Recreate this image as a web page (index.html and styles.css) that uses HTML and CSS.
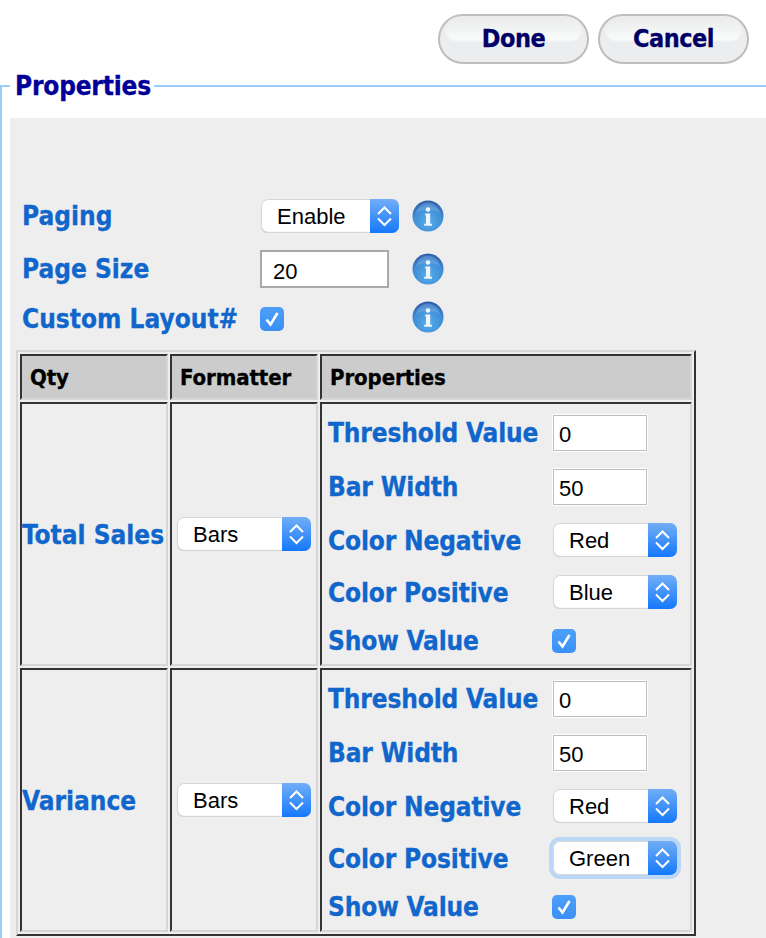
FILE: index.html
```html
<!DOCTYPE html>
<html lang="en">
<head>
<meta charset="utf-8">
<title>Properties</title>
<link rel="stylesheet" href="styles.css">
</head>
<body>
<svg class="defs" width="0" height="0" aria-hidden="true">
  <defs>
    <radialGradient id="ig" cx="50%" cy="68%" r="66%">
      <stop offset="0" stop-color="#58aeea"/>
      <stop offset="0.72" stop-color="#3f8dd6"/>
      <stop offset="1" stop-color="#2f5aa8"/>
    </radialGradient>
    <symbol id="info" viewBox="0 0 32 32">
      <circle cx="16" cy="16" r="15.500" fill="url(#ig)"/>
      <path d="M4 13C6 6 11 2.500 16 2.500s10 3.500 12 10.500C21 9 11 9 4 13z" fill="#fff" opacity=".14"/>
      <circle cx="16" cy="9.500" r="2.300" fill="#eef6fd"/>
      <path d="M13.200 13.500h5v10.200h1.800v2.100h-7.800v-2.100h1.800v-8.100h-.8z" fill="#eef6fd"/>
    </symbol>
    <symbol id="chev" viewBox="0 0 29 34">
      <path d="M8 15l6.500-6.500 6.500 6.500M8 19.500l6.500 6.500 6.500-6.500" fill="none" stroke="#fff" stroke-width="2"/>
    </symbol>
    <symbol id="tick" viewBox="0 0 24 24">
      <path d="M6.500 12.500l4 5 7-11.500" fill="none" stroke="#fff" stroke-width="2.600"/>
    </symbol>
  </defs>
</svg>
<div class="actions">
  <button class="pill" type="button">Done</button>
  <button class="pill" type="button">Cancel</button>
</div>
<fieldset class="group">
  <legend class="group-title">Properties</legend>
  <div class="panel">
    <div class="row row-paging">
      <span class="label">Paging</span>
      <div class="select select-wide"><span class="select-text">Enable</span><span class="select-arrows"><svg width="29" height="34"><use href="#chev"/></svg></span></div>
      <svg class="info" width="32" height="32"><use href="#info"/></svg>
    </div>
    <div class="row row-size">
      <span class="label">Page Size</span>
      <input class="page-size" type="text" value="20">
      <svg class="info" width="32" height="32"><use href="#info"/></svg>
    </div>
    <div class="row row-custom">
      <span class="label">Custom Layout#</span>
      <span class="check check-top"><svg width="24" height="24"><use href="#tick"/></svg></span>
      <svg class="info" width="32" height="32"><use href="#info"/></svg>
    </div>
    <table class="grid">
      <thead>
        <tr>
          <th class="col-qty">Qty</th>
          <th class="col-fmt">Formatter</th>
          <th class="col-props">Properties</th>
        </tr>
      </thead>
      <tbody>
        <tr>
          <td class="name"><span class="label">Total Sales</span></td>
          <td class="fmt"><div class="select select-fmt"><span class="select-text">Bars</span><span class="select-arrows"><svg width="29" height="34"><use href="#chev"/></svg></span></div></td>
          <td class="props">
            <div class="prop-grid">
              <span class="label">Threshold Value</span><input class="num" type="text" value="0">
              <span class="label">Bar Width</span><input class="num" type="text" value="50">
              <span class="label label-select">Color Negative</span><div class="select select-prop"><span class="select-text">Red</span><span class="select-arrows"><svg width="29" height="34"><use href="#chev"/></svg></span></div>
              <span class="label label-select">Color Positive</span><div class="select select-prop"><span class="select-text">Blue</span><span class="select-arrows"><svg width="29" height="34"><use href="#chev"/></svg></span></div>
              <span class="label">Show Value</span><span class="check check-prop"><svg width="24" height="24"><use href="#tick"/></svg></span>
            </div>
          </td>
        </tr>
        <tr>
          <td class="name"><span class="label">Variance</span></td>
          <td class="fmt"><div class="select select-fmt"><span class="select-text">Bars</span><span class="select-arrows"><svg width="29" height="34"><use href="#chev"/></svg></span></div></td>
          <td class="props">
            <div class="prop-grid">
              <span class="label">Threshold Value</span><input class="num" type="text" value="0">
              <span class="label">Bar Width</span><input class="num" type="text" value="50">
              <span class="label label-select">Color Negative</span><div class="select select-prop"><span class="select-text">Red</span><span class="select-arrows"><svg width="29" height="34"><use href="#chev"/></svg></span></div>
              <span class="label label-select">Color Positive</span><div class="select select-prop select-focus"><span class="select-text">Green</span><span class="select-arrows"><svg width="29" height="34"><use href="#chev"/></svg></span></div>
              <span class="label">Show Value</span><span class="check check-prop"><svg width="24" height="24"><use href="#tick"/></svg></span>
            </div>
          </td>
        </tr>
      </tbody>
    </table>
  </div>
</fieldset>
</body>
</html>
```
FILE: styles.css
```css
html, body {
  margin: 0;
  height: 938px;
  overflow: hidden;
  background: #fff;
}
body {
  font-family: "DejaVu Sans Condensed", "DejaVu Sans", sans-serif;
}
.defs { position: absolute; }

.actions {
  display: flex;
  justify-content: flex-end;
  gap: 9px;
  padding: 14px 17px 0 0;
  height: 50px;
}
.pill {
  position: relative;
  isolation: isolate;
  width: 151px;
  height: 50px;
  box-sizing: border-box;
  border: 2px solid #bdbdbd;
  border-radius: 25px;
  background: #ecedef;
  font: bold 25px "DejaVu Sans Condensed", "DejaVu Sans", sans-serif;
  letter-spacing: -0.5px;
  -webkit-text-stroke: 0.3px #000066;
  color: #000066;
  padding: 0 0 2px;
}
.pill::before {
  content: "";
  position: absolute;
  z-index: -1;
  left: 6px;
  right: 6px;
  top: 1px;
  height: 24px;
  border-radius: 22px 22px 16px 16px;
  background: linear-gradient(#e9eaeb, #fafbfb 90%);
  filter: blur(0.8px);
}

.group {
  margin: 6px 0 0;
  padding: 0 0 0 8px;
  border: 0;
  border-top: 2px solid #99ccff;
  border-left: 2px solid #99ccff;
  min-width: 0;
  height: 900px;
}
.group-title {
  margin-left: 0;
  padding: 0 3px 0 5px;
  font-weight: bold;
  font-size: 26px;
  line-height: 32px;
  letter-spacing: -0.2px;
  -webkit-text-stroke: 0.3px #000099;
  color: #000099;
}
.panel {
  margin-top: 16px;
  background: #eeeeee;
  padding: 80px 0 20px 6px;
}

.label {
  font-weight: bold;
  font-size: 26px;
  color: #1166cc;
  -webkit-text-stroke: 0.3px #1166cc;
  white-space: nowrap;
}

.row {
  display: grid;
  grid-template-columns: 238px 151px 32px;
  column-gap: 0;
  align-items: center;
  padding-left: 6px;
}
.row-paging { height: 36px; margin-bottom: 16px; }
.row-size { height: 38px; margin-bottom: 12px; }
.row-custom { height: 32px; margin-bottom: 18px; }
.row-custom .label { padding-top: 4px; }
.info { display: block; margin-left: 1px; }

.page-size {
  box-sizing: border-box;
  width: 129px;
  height: 38px;
  border: 2px solid #a9a9a9;
  background: #fff;
  font: 22px "Liberation Sans", Arial, sans-serif;
  padding: 6px 11px 0;
  color: #000;
  outline: 0;
}

.select {
  display: flex;
  box-sizing: border-box;
  height: 34px;
  border-radius: 7px;
  background: #fff;
  box-shadow: inset 0 0 0 1px #d6d6d6, inset 0 -2px 1px -1px #b4b4b4;
  font: 22px "Liberation Sans", Arial, sans-serif;
  color: #000;
  overflow: hidden;
}
.select-text { flex: 1; padding-left: 16px; line-height: 35px; }
.select-arrows {
  width: 29px;
  height: 34px;
  background: linear-gradient(#72adf6, #1478fb);
}
.select-arrows svg { display: block; }
.select-wide { width: 138px; margin-left: 1px; }
.select-fmt { width: 134px; }
.select-prop { width: 124px; }
.select-focus { box-shadow: inset 0 0 0 1px #d6d6d6, 0 0 0 4px #bad7f6; overflow: visible; }
.select-focus .select-arrows { border-radius: 0 7px 7px 0; }

.check {
  display: block;
  width: 24px;
  height: 24px;
  border-radius: 5px;
  background: linear-gradient(#4d9ff8, #3a90f7);
}
.check svg { display: block; }
.check-top { margin-top: 4px; }
.check-prop { margin: 11px 0 11px -1px; }

.grid {
  border-collapse: separate;
  border-spacing: 2px;
  border: 2px solid;
  border-color: #d6d6d6 #333 #333 #d6d6d6;
  table-layout: fixed;
  width: 680px;
}
.grid th, .grid td {
  border: 2px solid;
  border-color: #333 #d6d6d6 #d6d6d6 #333;
  padding: 0;
}
.grid th {
  background: #cccccc;
  height: 46px;
  text-align: left;
  font-size: 22px;
  font-weight: bold;
  letter-spacing: -0.1px;
  -webkit-text-stroke: 0.3px #000;
  color: #000;
  padding-left: 8px;
  box-sizing: border-box;
}
.col-qty { width: 148px; }
.col-fmt { width: 148px; }
.grid td { vertical-align: middle; }
.name .label { display: block; padding-top: 2px; }
.fmt { padding-left: 5px !important; }
.props { padding: 2px 0 0 6px !important; }
.prop-grid {
  display: grid;
  grid-template-columns: 225px 1fr;
  align-items: center;
}
.prop-grid .label { letter-spacing: -0.15px; }
.prop-grid .label-select { padding-top: 2px; }
.num {
  box-sizing: border-box;
  width: 94px;
  height: 36px;
  margin: 9px 0;
  border: 1px solid #bdbdbd;
  outline: 1px solid #fff;
  outline-offset: 0;
  background: #fff;
  font: 22px "Liberation Sans", Arial, sans-serif;
  padding: 4px 5px 0;
  color: #000;
}
.prop-grid .select { margin: 9px 0; }
```
